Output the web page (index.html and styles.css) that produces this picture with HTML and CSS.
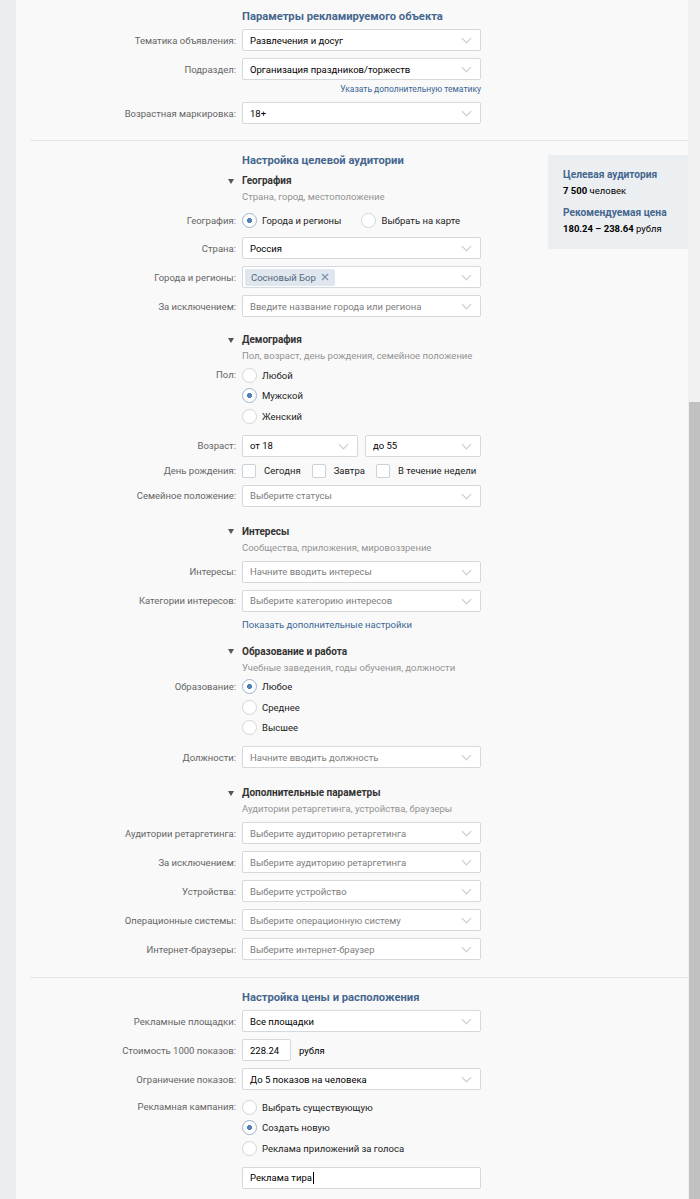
FILE: index.html
```html
<!DOCTYPE html>
<html lang="ru">
<head>
  <meta charset="UTF-8" />
  <title>Новое объявление</title>
  <link rel="stylesheet" href="styles.css">
</head>
<body>
  <div class="strip"></div>

  <main class="page">
    <!-- Параметры объекта -->
    <section class="block block-first">
      <div class="form-col">
        <h2 class="block-title">Параметры рекламируемого объекта</h2>
        <div class="row">
          <span class="row-label">Тематика объявления:</span>
          <div class="select"><span class="value">Развлечения и досуг</span></div>
        </div>
        <div class="row row-tight">
          <span class="row-label">Подраздел:</span>
          <div class="select"><span class="value">Организация праздников/торжеств</span></div>
        </div>
        <div class="row-link"><a class="small-link" href="#">Указать дополнительную тематику</a></div>
        <div class="row">
          <span class="row-label">Возрастная маркировка:</span>
          <div class="select"><span class="value">18+</span></div>
        </div>
      </div>
    </section>

    <hr class="divider">

    <!-- Целевая аудитория -->
    <section class="block">
      <div class="form-col">
        <h2 class="block-title">Настройка целевой аудитории</h2>

        <div class="group-head group-first">
          <span class="arrow"></span>
          <span class="group-title">География</span>
        </div>
        <div class="group-sub">Страна, город, местоположение</div>
        <div class="row row-geo">
          <span class="row-label">География:</span>
          <div class="inline-options">
            <span class="radio checked">Города и регионы</span>
            <span class="radio">Выбрать на карте</span>
          </div>
        </div>
        <div class="row">
          <span class="row-label">Страна:</span>
          <div class="select"><span class="value">Россия</span></div>
        </div>
        <div class="row">
          <span class="row-label">Города и регионы:</span>
          <div class="select select-tokens">
            <span class="token">Сосновый Бор
              <svg width="8" height="8" viewBox="0 0 8 8"><path d="M1 1L7 7M7 1L1 7" stroke="#7f93a8" stroke-width="1.3" fill="none"/></svg>
            </span>
          </div>
        </div>
        <div class="row">
          <span class="row-label">За исключением:</span>
          <div class="select"><span class="placeholder">Введите название города или региона</span></div>
        </div>

        <div class="group-head group-near">
          <span class="arrow"></span>
          <span class="group-title">Демография</span>
        </div>
        <div class="group-sub">Пол, возраст, день рождения, семейное положение</div>
        <div class="row row-list row-list-sub">
          <span class="row-label">Пол:</span>
          <div class="radio-list">
            <span class="radio">Любой</span>
            <span class="radio checked">Мужской</span>
            <span class="radio">Женский</span>
          </div>
        </div>
        <div class="row">
          <span class="row-label">Возраст:</span>
          <div class="pair">
            <div class="select"><span class="value">от 18</span></div>
            <div class="select"><span class="value">до 55</span></div>
          </div>
        </div>
        <div class="row row-checks">
          <span class="row-label">День рождения:</span>
          <div class="inline-checks">
            <span class="check">Сегодня</span>
            <span class="check">Завтра</span>
            <span class="check">В течение недели</span>
          </div>
        </div>
        <div class="row">
          <span class="row-label">Семейное положение:</span>
          <div class="select"><span class="placeholder">Выберите статусы</span></div>
        </div>

        <div class="group-head">
          <span class="arrow"></span>
          <span class="group-title">Интересы</span>
        </div>
        <div class="group-sub">Сообщества, приложения, мировоззрение</div>
        <div class="row">
          <span class="row-label">Интересы:</span>
          <div class="select"><span class="placeholder">Начните вводить интересы</span></div>
        </div>
        <div class="row">
          <span class="row-label">Категории интересов:</span>
          <div class="select"><span class="placeholder">Выберите категорию интересов</span></div>
        </div>
        <div class="more-link"><a href="#">Показать дополнительные настройки</a></div>

        <div class="group-head group-after-link">
          <span class="arrow"></span>
          <span class="group-title">Образование и работа</span>
        </div>
        <div class="group-sub">Учебные заведения, годы обучения, должности</div>
        <div class="row row-list row-list-sub">
          <span class="row-label">Образование:</span>
          <div class="radio-list">
            <span class="radio checked">Любое</span>
            <span class="radio">Среднее</span>
            <span class="radio">Высшее</span>
          </div>
        </div>
        <div class="row">
          <span class="row-label">Должности:</span>
          <div class="select"><span class="placeholder">Начните вводить должность</span></div>
        </div>

        <div class="group-head">
          <span class="arrow"></span>
          <span class="group-title">Дополнительные параметры</span>
        </div>
        <div class="group-sub">Аудитории ретаргетинга, устройства, браузеры</div>
        <div class="row">
          <span class="row-label">Аудитории ретаргетинга:</span>
          <div class="select"><span class="placeholder">Выберите аудиторию ретаргетинга</span></div>
        </div>
        <div class="row">
          <span class="row-label">За исключением:</span>
          <div class="select"><span class="placeholder">Выберите аудиторию ретаргетинга</span></div>
        </div>
        <div class="row">
          <span class="row-label">Устройства:</span>
          <div class="select"><span class="placeholder">Выберите устройство</span></div>
        </div>
        <div class="row">
          <span class="row-label">Операционные системы:</span>
          <div class="select"><span class="placeholder">Выберите операционную систему</span></div>
        </div>
        <div class="row">
          <span class="row-label">Интернет-браузеры:</span>
          <div class="select"><span class="placeholder">Выберите интернет-браузер</span></div>
        </div>
      </div>

      <aside class="summary">
        <div class="summary-item">
          <div class="summary-title">Целевая аудитория</div>
          <div><b>7 500</b> человек</div>
        </div>
        <div class="summary-item">
          <div class="summary-title">Рекомендуемая цена</div>
          <div><b>180.24 – 238.64</b> рубля</div>
        </div>
      </aside>
    </section>

    <hr class="divider">

    <!-- Цена и расположение -->
    <section class="block">
      <div class="form-col">
        <h2 class="block-title">Настройка цены и расположения</h2>
        <div class="row">
          <span class="row-label">Рекламные площадки:</span>
          <div class="select"><span class="value">Все площадки</span></div>
        </div>
        <div class="row">
          <span class="row-label">Стоимость 1000 показов:</span>
          <div class="price">
            <div class="text-input text-input-short">228.24</div>
            <span>рубля</span>
          </div>
        </div>
        <div class="row">
          <span class="row-label">Ограничение показов:</span>
          <div class="select"><span class="value">До 5 показов на человека</span></div>
        </div>
        <div class="row row-list">
          <span class="row-label">Рекламная кампания:</span>
          <div class="radio-list">
            <span class="radio">Выбрать существующую</span>
            <span class="radio checked">Создать новую</span>
            <span class="radio">Реклама приложений за голоса</span>
          </div>
        </div>
        <div class="row">
          <span class="row-label"></span>
          <div class="text-input">Реклама тира<span class="caret"></span></div>
        </div>
      </div>
    </section>
  </main>

  <div class="scrollbar"><div class="scrollbar-thumb"></div></div>
</body>
</html>
```

FILE: styles.css
```css
:root {
  --page-bg: #f9f9f9;
  --strip-bg: #ebedf0;
  --label: #656565;
  --muted: #939393;
  --title-blue: #45678f;
  --link: #386694;
  --border: #d3d9de;
  --control-mark: #5181b8;
}

* {
  box-sizing: border-box;
}

html, body {
  margin: 0;
  height: 1199px;
  overflow: hidden;
}

body {
  display: flex;
  font-family: Roboto, "Open Sans", sans-serif;
  font-size: 9.5px;
  color: #000;
  background: var(--page-bg);
}

.strip {
  width: 16px;
  flex: none;
  background: var(--strip-bg);
}

.page {
  width: 672px;
  flex: none;
  background: var(--page-bg);
}

.scrollbar {
  width: 12px;
  flex: none;
  background: #f1f1f1;
  padding: 402px 0 0 1px;
  display: flex;
  flex-direction: column;
}

.scrollbar-thumb {
  flex: 1;
  background: #c1c1c1;
}

/* блоки */
.block {
  display: flex;
  align-items: flex-start;
  padding: 12px 0 10px;
}

.block-first {
  padding: 9px 0 9px;
}

.form-col {
  width: 532px;
  flex: none;
  display: flex;
  flex-direction: column;
}

.divider {
  margin: 0 0 0 14px;
  border: 0;
  border-top: 1px solid #e3e6ea;
  height: 0;
}

.block-title {
  margin: 0 0 4px 226px;
  font-size: 11.2px;
  line-height: 16px;
  font-weight: 700;
  color: var(--title-blue);
}

/* строки формы */
.row {
  display: grid;
  grid-template-columns: 220px 239px;
  column-gap: 6px;
  align-items: center;
  min-height: 22px;
  margin-bottom: 7px;
}

.row-tight {
  margin-bottom: 2px;
}

.row-geo {
  margin-top: -1px;
  margin-bottom: 6px;
}

.row-label {
  text-align: right;
  color: var(--label);
  white-space: nowrap;
}

.row-link {
  width: 465px;
  text-align: right;
  line-height: 14px;
  margin-bottom: 6px;
}

.small-link {
  font-size: 8.5px;
  color: var(--link);
  text-decoration: none;
}

.select {
  position: relative;
  height: 22px;
  display: flex;
  align-items: center;
  padding: 0 24px 0 7px;
  background: #fff;
  border: 1px solid var(--border);
  border-radius: 2px;
  white-space: nowrap;
  overflow: hidden;
}

.select::after {
  content: '';
  position: absolute;
  right: 10px;
  top: 5px;
  width: 6px;
  height: 6px;
  border-right: 1px solid #c3c9d0;
  border-bottom: 1px solid #c3c9d0;
  transform: rotate(45deg);
}

.placeholder {
  color: #7d7d7d;
}

.select-tokens {
  padding-left: 2px;
}

.token {
  display: inline-flex;
  align-items: center;
  gap: 5px;
  height: 17px;
  padding: 0 6px;
  background: #dfe6ee;
  color: #55677d;
  border-radius: 2px;
}

.pair {
  display: grid;
  grid-template-columns: 1fr 1fr;
  gap: 7px;
}

.price {
  display: flex;
  align-items: center;
  gap: 8px;
}

.text-input {
  height: 22px;
  display: flex;
  align-items: center;
  padding: 0 7px;
  background: #fff;
  border: 1px solid var(--border);
  border-radius: 2px;
}

.text-input-short {
  width: 49px;
}

.caret {
  display: inline-block;
  width: 1px;
  height: 12px;
  background: #000;
  margin-left: 1px;
}

/* группы */
.group-head {
  display: grid;
  grid-template-columns: 220px 239px;
  column-gap: 6px;
  align-items: center;
  line-height: 16px;
  margin-top: 10px;
}

.group-first {
  margin-top: 0;
}

.group-near {
  margin-top: 8px;
}

.group-after-link {
  margin-top: 12px;
}

.arrow {
  justify-self: end;
  margin-right: 2px;
  width: 0;
  height: 0;
  border-left: 3px solid transparent;
  border-right: 3px solid transparent;
  border-top: 5px solid #555;
}

.group-title {
  font-size: 10px;
  font-weight: 700;
  color: #333;
}

.group-sub {
  margin: 1px 0 6px 226px;
  line-height: 14px;
  color: var(--muted);
}

.more-link {
  margin: -1px 0 0 226px;
  line-height: 14px;
}

.more-link a {
  color: var(--link);
  text-decoration: none;
}

/* переключатели */
.row-list {
  align-items: start;
  margin-bottom: 8px;
}

.row-list-sub {
  margin-top: -4px;
}

.row-list .row-label {
  line-height: 20.5px;
}

.radio-list {
  display: flex;
  flex-direction: column;
}

.radio {
  display: flex;
  align-items: center;
  height: 20.5px;
  color: #222;
  white-space: nowrap;
}

.radio::before {
  content: '';
  width: 13px;
  height: 13px;
  margin-right: 5px;
  flex: none;
  border: 1px solid #d0d6dc;
  border-radius: 50%;
  background: #fff;
}

.radio.checked::before {
  border-color: #9db3cd;
  background: radial-gradient(circle, var(--control-mark) 0 2.3px, #fff 2.8px);
}

.inline-options {
  display: flex;
  gap: 20px;
}

.row-checks {
  min-height: 14px;
}

.inline-checks {
  display: flex;
  gap: 11px;
}

.check {
  display: flex;
  align-items: center;
  color: #222;
  white-space: nowrap;
}

.check::before {
  content: '';
  width: 12px;
  height: 12px;
  margin-right: 8px;
  flex: none;
  border: 1px solid #ccd2d9;
  border-radius: 2px;
  background: #fff;
}

/* правая панель */
.summary {
  width: 140px;
  flex: none;
  margin-top: 2px;
  padding: 12px 15px;
  background: #eceff2;
  line-height: 16px;
}

.summary-item + .summary-item {
  margin-top: 6px;
}

.summary-title {
  font-size: 10.2px;
  font-weight: 700;
  color: var(--title-blue);
}

.summary b {
  font-weight: 700;
}
```
